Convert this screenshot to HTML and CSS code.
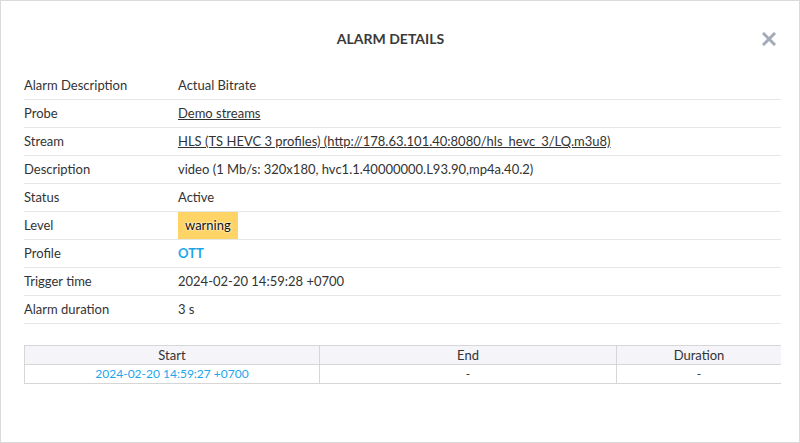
FILE: index.html
```html
<!DOCTYPE html>
<html lang="en">
<head>
    <meta charset="UTF-8">
    <title>Alarm details</title>
    <link rel="stylesheet" href="styles.css">
</head>
<body>

<div class="modal">
    <div class="modal-header">
        <h1>ALARM DETAILS</h1>
        <button class="close-btn" title="Close">
            <svg width="14" height="14" viewBox="0 0 14 14">
                <path d="M2 2 L12 12 M12 2 L2 12" stroke="#a3abb8" stroke-width="3" stroke-linecap="square"/>
            </svg>
        </button>
    </div>

    <table class="details">
        <tr><th>Alarm Description</th><td>Actual Bitrate</td></tr>
        <tr><th>Probe</th><td><a href="#">Demo streams</a></td></tr>
        <tr><th>Stream</th><td><a href="#">HLS (TS HEVC 3 profiles) (http://178.63.101.40:8080/hls_hevc_3/LQ.m3u8)</a></td></tr>
        <tr><th>Description</th><td>video (1 Mb/s: 320x180, hvc1.1.40000000.L93.90,mp4a.40.2)</td></tr>
        <tr><th>Status</th><td>Active</td></tr>
        <tr><th>Level</th><td><span class="level level-warning">warning</span></td></tr>
        <tr><th>Profile</th><td><span class="profile">OTT</span></td></tr>
        <tr><th>Trigger time</th><td>2024-02-20 14:59:28 +0700</td></tr>
        <tr><th>Alarm duration</th><td>3 s</td></tr>
    </table>

    <div class="history-wrap">
        <table class="history">
            <colgroup>
                <col class="col-start">
                <col class="col-end">
                <col>
            </colgroup>
            <thead>
                <tr><th>Start</th><th>End</th><th>Duration</th></tr>
            </thead>
            <tbody>
                <tr><td class="time">2024-02-20 14:59:27 +0700</td><td>-</td><td>-</td></tr>
            </tbody>
        </table>
    </div>
</div>

</body>
</html>
```

FILE: styles.css
```css
html, body {
    height: 100%;
}
body {
    margin: 0;
    font-family: "Lato", "Liberation Sans", Arial, sans-serif;
    font-size: 13px;
    color: #333;
    background: #fff;
}
.modal {
    box-sizing: border-box;
    height: 100%;
    border: 1px solid #dadada;
    padding: 0 18px 0 23px;
}
.modal-header {
    display: flex;
    align-items: center;
    justify-content: center;
    height: 70px;
    padding-right: 24px;
    position: relative;
}
.modal-header h1 {
    margin: 4px 0 0;
    font-size: 14px;
    font-weight: bold;
    color: #3a3a3a;
}
.close-btn {
    position: absolute;
    right: 5px;
    top: 31px;
    background: none;
    border: none;
    padding: 0;
    cursor: pointer;
    line-height: 0;
}

.details {
    width: 100%;
    border-collapse: collapse;
}
.details tr {
    height: 28px;
    border-bottom: 1px solid #e6e6e6;
}
.details th, .details td {
    padding: 0;
    text-align: left;
    vertical-align: middle;
}
.details th {
    width: 154px;
    font-weight: normal;
}
.details a {
    color: #333;
}
.level {
    display: inline-block;
    height: 27px;
    line-height: 27px;
    padding: 0 7px;
}
.level-warning {
    background-color: #ffd466;
    color: #111;
    text-shadow: 0 0 2px #fff, 0 0 2px #fff;
}
.profile {
    color: #1ba6ec;
    font-weight: bold;
}

.history-wrap {
    margin-top: 21px;
    overflow: hidden;
}
.history {
    width: calc(100% + 1px);
    table-layout: fixed;
    border-collapse: collapse;
    font-size: 12px;
}
.col-start {
    width: 295px;
}
.col-end {
    width: 297px;
}
.history th, .history td {
    border: 1px solid #d6d6d6;
    text-align: center;
    padding: 0;
    height: 18px;
}
.history th {
    background-color: #f5f4f8;
    font-weight: normal;
    font-size: 13px;
}
.history td.time {
    color: #1ba6ec;
}
```
